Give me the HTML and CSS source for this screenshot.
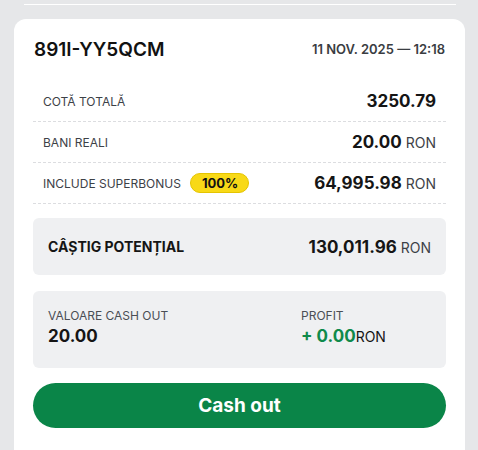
FILE: index.html
```html
<!DOCTYPE html>
<html lang="ro">
<head>
    <meta charset="UTF-8">
    <meta name="viewport" content="width=device-width, initial-scale=1.0">
    <title>Bilet</title>
    <link rel="stylesheet" href="styles.css">
</head>
<body>
    <div class="top-line"></div>

    <div class="ticket">
        <div class="ticket-header">
            <h1 class="ticket-id">891I-YY5QCM</h1>
            <span class="ticket-date">11 NOV. 2025 — 12:18</span>
        </div>

        <div class="row">
            <span class="row-label">COTĂ TOTALĂ</span>
            <span class="row-value">3250.79</span>
        </div>
        <div class="row">
            <span class="row-label">BANI REALI</span>
            <span class="row-value">20.00 <small>RON</small></span>
        </div>
        <div class="row">
            <span class="row-label">INCLUDE SUPERBONUS <span class="badge">100%</span></span>
            <span class="row-value">64,995.98 <small>RON</small></span>
        </div>

        <div class="box potential">
            <span class="potential-label">CÂȘTIG POTENȚIAL</span>
            <span class="row-value">130,011.96 <small>RON</small></span>
        </div>

        <div class="box cashout">
            <div class="cashout-col">
                <span class="small-label">VALOARE CASH OUT</span>
                <span class="row-value">20.00</span>
            </div>
            <div class="cashout-col profit">
                <span class="small-label">PROFIT</span>
                <span class="row-value green">+ 0.00<small>RON</small></span>
            </div>
        </div>

        <button class="cashout-btn" type="button">Cash out</button>
    </div>
</body>
</html>
```

FILE: styles.css
```css
body {
    margin: 0;
    font-family: Inter, "Noto Sans", sans-serif;
    background-color: #e6e7e9;
    color: #151515;
}

.top-line {
    height: 1px;
    margin: 4px 22px 0 24px;
    background-color: #fff;
}

.ticket {
    width: 451px;
    box-sizing: border-box;
    margin: 14px 0 0 14px;
    padding: 18px 19px 30px;
    background-color: #fff;
    border-radius: 12px 12px 0 0;
}

.ticket-header {
    display: flex;
    justify-content: space-between;
    align-items: center;
    height: 24px;
    margin-bottom: 20px;
}

.ticket-id {
    margin: 0 0 0 1px;
    font-size: 19px;
    font-weight: 600;
    color: #111;
}

.ticket-date {
    font-size: 13px;
    font-weight: 600;
    color: #3a3d42;
    padding-right: 1px;
}

.row {
    display: flex;
    justify-content: space-between;
    align-items: center;
    height: 40px;
    padding: 0 10px;
    border-bottom: 1px dashed #dcdde0;
}

.row-label {
    display: flex;
    align-items: center;
    font-size: 12px;
    color: #3d4147;
}

.row-value {
    font-size: 17px;
    font-weight: 700;
    color: #151515;
}

.row-value small {
    font-size: 14px;
    font-weight: 400;
    color: #3d4147;
}

.badge {
    margin-left: 9px;
    padding: 1px 10px 1px 11px;
    font-size: 13px;
    font-weight: 700;
    color: #111;
    background-color: #f8d917;
    border: 1px solid #e5c400;
    border-radius: 10px;
}

.box {
    background-color: #eff0f2;
    border-radius: 6px;
}

.potential {
    display: flex;
    justify-content: space-between;
    align-items: center;
    height: 57px;
    margin-top: 14px;
    padding: 0 15px;
}

.potential-label {
    font-size: 14px;
    font-weight: 700;
    color: #151515;
}

.cashout {
    display: flex;
    margin-top: 16px;
    padding: 17px 15px 19px;
}

.cashout-col {
    display: flex;
    flex-direction: column;
    flex: 0 0 253px;
}

.cashout-col.profit {
    flex: 1;
}

.small-label {
    font-size: 12px;
    line-height: 16px;
    color: #4a4e55;
}

.cashout .row-value {
    line-height: 24px;
}

.green {
    color: #0f8a4b;
}

.profit small {
    color: #151515;
}

.cashout-btn {
    display: block;
    width: 100%;
    height: 45px;
    margin-top: 15px;
    border: none;
    border-radius: 23px;
    background-color: #0a8548;
    color: #fff;
    font-family: inherit;
    font-size: 19px;
    font-weight: 700;
    cursor: pointer;
}
```
